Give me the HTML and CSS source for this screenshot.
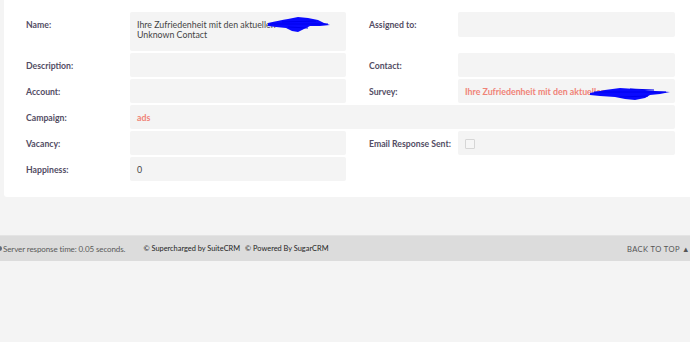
FILE: index.html
```html
<!DOCTYPE html>
<html lang="de">
  <head>
    <meta charset="UTF-8" />
    <meta name="viewport" content="width=device-width, initial-scale=1.0" />
    <title>Survey Response</title>
    <link rel="stylesheet" href="styles.css">
  </head>
  <body>
    <div class="detail-panel">
      <div class="detail-grid">
        <div class="label">Name:</div>
        <div class="field field-name">
          Ihre Zufriedenheit mit den aktuellen<br>Unknown Contact
          <svg class="scribble scribble-name" width="62" height="16" viewBox="0 0 62 16">
            <path d="M0,6 C8,4 14,3 20,2 L30,0 L40,1 L50,3 L56,6 L62,8 L52,9 L42,9 L36,12 L30,15 L24,14 L18,11 L8,10 L0,9 Z" fill="#0a0aff" />
            <path d="M2,7 L60,7 M14,5 L48,4 M20,10 L40,11" stroke="#0000ee" stroke-width="1.2" fill="none" />
          </svg>
        </div>
        <div class="label label-right">Assigned to:</div>
        <div class="field field-short"></div>

        <div class="label">Description:</div>
        <div class="field"></div>
        <div class="label label-right">Contact:</div>
        <div class="field"></div>

        <div class="label">Account:</div>
        <div class="field"></div>
        <div class="label label-right">Survey:</div>
        <div class="field link-field">
          <a href="#">Ihre Zufriedenheit mit den aktuellen</a>
          <svg class="scribble scribble-survey" width="80" height="12" viewBox="0 0 80 12">
            <path d="M0,5 L15,2 L30,0 L45,1 L55,2 L65,3 L80,4 L70,6 L60,7 L55,10 L45,12 L35,11 L25,9 L10,8 L0,7 Z" fill="#0a0aff" />
            <path d="M4,4 L76,4 M30,9 L58,8 M40,1 L64,2" stroke="#0000ee" stroke-width="1" fill="none" />
          </svg>
        </div>

        <div class="label">Campaign:</div>
        <div class="field field-wide link-field"><a href="#">ads</a></div>

        <div class="label">Vacancy:</div>
        <div class="field"></div>
        <div class="label label-right">Email Response Sent:</div>
        <div class="field"><span class="checkbox"></span></div>

        <div class="label">Happiness:</div>
        <div class="field">0</div>
      </div>
    </div>

    <footer class="footer">
      <span class="footer-dot"></span>
      <span class="response-time">Server response time: 0.05 seconds.</span>
      <span class="copyright copyright-first">&copy; Supercharged by SuiteCRM</span>
      <span class="copyright">&copy; Powered By SugarCRM</span>
      <a class="back-to-top" href="#">Back to top &#9650;</a>
    </footer>
  </body>
</html>
```

FILE: styles.css
```css
* {
  margin: 0;
  padding: 0;
  box-sizing: border-box;
}

html,
body {
  overflow: hidden;
}

body {
  font-family: "Lato", "Open Sans", sans-serif;
  background-color: #f4f4f4;
  color: #444444;
  width: 690px;
  height: 342px;
}

a {
  text-decoration: none;
}

.detail-panel {
  background-color: #ffffff;
  margin-left: 4px;
  padding: 12px 0 16px 22px;
  border-bottom-left-radius: 3px;
}

.detail-grid {
  display: grid;
  grid-template-columns: 104px 216px 112px 217px;
  row-gap: 2px;
  align-items: start;
}

.label {
  font-size: 8.7px;
  font-weight: bold;
  color: #534d64;
  height: 24px;
  line-height: 25px;
}

.label-right {
  padding-left: 23px;
}

.field {
  position: relative;
  background-color: #f4f4f4;
  border-radius: 2px;
  min-height: 24px;
  padding: 8px 7px 0 7px;
  font-size: 8.8px;
  line-height: 10px;
  color: #444444;
}

.field-name {
  height: 39px;
  line-height: 9.6px;
}

.field-short {
  height: 25px;
}

.field-wide {
  grid-column: 2 / 5;
}

.link-field a {
  color: #f08377;
  font-weight: bold;
}

.scribble {
  position: absolute;
}

.scribble-name {
  left: 138px;
  top: 5px;
}

.scribble-survey {
  left: 132px;
  top: 9px;
}

.checkbox {
  display: block;
  width: 10px;
  height: 10px;
  border: 1px solid #d6d6d6;
  border-radius: 1px;
  background-color: #f6f6f6;
}

.footer {
  display: flex;
  align-items: center;
  margin-top: 38px;
  height: 26px;
  background-color: #dcdcdc;
  border-top: 1px solid #e4e4e4;
  white-space: nowrap;
}

.footer-dot {
  width: 5px;
  height: 5px;
  margin-left: -3px;
  margin-right: 1px;
  border-radius: 50%;
  background-color: #5c6b80;
}

.response-time {
  font-size: 8px;
  color: #5a5a5a;
  letter-spacing: -0.1px;
}

.copyright {
  font-size: 7.4px;
  color: #1e1e1e;
  margin-left: 5px;
}

.copyright-first {
  margin-left: 18px;
}

.back-to-top {
  margin-left: auto;
  font-size: 7.6px;
  color: #555555;
  text-transform: uppercase;
  letter-spacing: 0.4px;
}
```
